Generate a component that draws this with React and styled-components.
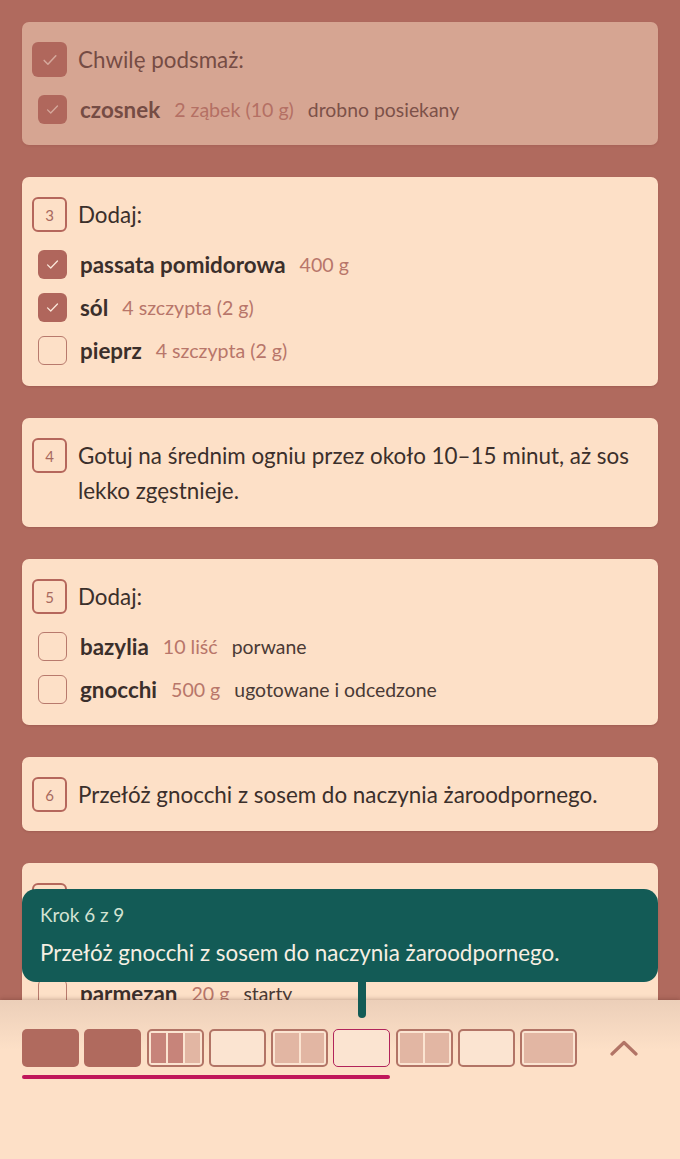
import styled, { createGlobalStyle } from "styled-components"

const GlobalStyle = createGlobalStyle`
  html, body {
    margin: 0;
    padding: 0;
    background: #b06a5e;
    font-family: Lato, "Noto Sans", sans-serif;
  }
  * { box-sizing: border-box; }
`

const steps = [
  {
    n: 2, done: true, text: "Chwilę podsmaż:",
    ingredients: [{ name: "czosnek", qty: "2 ząbek (10 g)", note: "drobno posiekany", checked: true }],
  },
  {
    n: 3, text: "Dodaj:",
    ingredients: [
      { name: "passata pomidorowa", qty: "400 g", checked: true },
      { name: "sól", qty: "4 szczypta (2 g)", checked: true },
      { name: "pieprz", qty: "4 szczypta (2 g)" },
    ],
  },
  { n: 4, text: "Gotuj na średnim ogniu przez około 10–15 minut, aż sos lekko zgęstnieje." },
  {
    n: 5, text: "Dodaj:",
    ingredients: [
      { name: "bazylia", qty: "10 liść", note: "porwane" },
      { name: "gnocchi", qty: "500 g", note: "ugotowane i odcedzone" },
    ],
  },
  { n: 6, text: "Przełóż gnocchi z sosem do naczynia żaroodpornego." },
  {
    n: 7, text: "Dodaj:",
    ingredients: [
      { name: "mozzarella", qty: "125 g", note: "porwana" },
      { name: "parmezan", qty: "20 g", note: "starty" },
    ],
  },
]

const segments = [
  { done: true },
  { done: true },
  { parts: [1, 1, 0] },
  {},
  { parts: [0, 0] },
  { current: true },
  { parts: [0, 0] },
  {},
  { parts: [0] },
]

const Page = styled.div`
  height: 100vh;
  overflow: hidden;
`

const List = styled.div`
  display: flex;
  flex-direction: column;
  gap: 32px;
  padding: 22px 22px 0;
`

const Card = styled.div`
  background: #fde0c7;
  border-radius: 7px;
  padding: 20px 10px 19px;
  opacity: ${p => (p.$done ? 0.5 : 1)};
  box-shadow: 0 1px 2px rgba(80, 30, 20, 0.15);
`

const Head = styled.div`
  display: flex;
  align-items: flex-start;
  gap: 11px;
`

const NumBox = styled.div`
  flex: none;
  width: 35px;
  height: 35px;
  border: 2px solid #b5675c;
  border-radius: 6px;
  display: flex;
  align-items: center;
  justify-content: center;
  font-size: 15px;
  color: #a8695e;
`

const StepBox = styled.div`
  flex: none;
  width: 35px;
  height: 35px;
  border-radius: 6px;
  background: #b0665c;
  display: flex;
  align-items: center;
  justify-content: center;
`

const StepText = styled.div`
  font-size: 22.4px;
  line-height: 35px;
  color: #3b2f2b;
`

const Ingredients = styled.div`
  display: flex;
  flex-direction: column;
  gap: 14px;
  margin-top: 18px;
  padding: 0 0 2px 6px;
`

const Row = styled.div`
  display: flex;
  align-items: center;
  height: 29px;
`

const Box = styled.div`
  flex: none;
  width: 29px;
  height: 29px;
  border-radius: 6px;
  margin-right: 13px;
  display: flex;
  align-items: center;
  justify-content: center;
  background: ${p => (p.$checked ? "#b0665c" : "transparent")};
  border: ${p => (p.$checked ? "none" : "1.5px solid #b87a6d")};
`

const Name = styled.span`
  font-size: 22.4px;
  font-weight: 700;
  color: #3b2f2b;
  margin-right: 14px;
  white-space: nowrap;
`

const Qty = styled.span`
  font-size: 19.6px;
  color: #b8766a;
  margin-right: 14px;
  white-space: nowrap;
`

const Note = styled.span`
  font-size: 19.4px;
  color: #4a3a35;
  white-space: nowrap;
`

const Bar = styled.div`
  position: fixed;
  left: 0;
  right: 0;
  bottom: 0;
  height: 159px;
  background: linear-gradient(#eccfb9, #fde0c7 50px);
  box-shadow: 0 -1px 4px rgba(60, 20, 10, 0.25);
  padding: 29px 22px 0;
  z-index: 5;
`

const Tooltip = styled.div`
  position: absolute;
  left: 22px;
  right: 22px;
  bottom: calc(100% + 18px);
  background: #135b56;
  border-radius: 14px;
  padding: 14px 18px 11px;
  &::after {
    content: "";
    position: absolute;
    left: 336px;
    top: 100%;
    width: 8px;
    height: 36px;
    background: #135b56;
    border-radius: 0 0 4px 4px;
  }
`

const TipLabel = styled.div`
  font-size: 18.9px;
  color: #d3e3d3;
  line-height: 24px;
`

const TipText = styled.div`
  font-size: 22.4px;
  color: #f6efe3;
  line-height: 36px;
  margin-top: 8px;
`

const BarRow = styled.div`
  display: flex;
  align-items: flex-start;
`

const Track = styled.div`
  display: flex;
  flex-direction: column;
  gap: 8px;
`

const Segs = styled.div`
  display: flex;
  gap: 5.3px;
`

const Seg = styled.div`
  width: 57px;
  height: 38px;
  border-radius: 5px;
  padding: 2px;
  display: flex;
  gap: 2px;
  background: ${p => (p.$done ? "#b06a5e" : "#fbe4d1")};
  border: ${p => (p.$done ? "none" : p.$current ? "1.5px solid #b2245a" : "2px solid #b27466")};
`

const Part = styled.div`
  flex: 1;
  background: ${p => (p.$on ? "#c7847a" : "#e2b6a3")};
`

const Progress = styled.div`
  height: 4px;
  width: 368px;
  border-radius: 2px;
  background: #c0165a;
`

const Chevron = styled.button`
  margin-left: auto;
  margin-top: 10px;
  margin-right: 20px;
  border: none;
  background: transparent;
  padding: 0;
  display: flex;
`

const Check = ({ size = 16 }) => (
  <svg width={size} height={size} viewBox="0 0 24 24" fill="none">
    <path d="M5 12.5l4.5 4.5L19 7" stroke="#fbe7da" strokeWidth="1.8" strokeLinecap="round" strokeLinejoin="round" />
  </svg>
)

const Step = ({ step }) => (
  <Card $done={step.done}>
    <Head>
      {step.done ? (
        <StepBox><Check size={20} /></StepBox>
      ) : (
        <NumBox>{step.n}</NumBox>
      )}
      <StepText>{step.text}</StepText>
    </Head>
    {step.ingredients && (
      <Ingredients>
        {step.ingredients.map(ing => (
          <Row key={ing.name}>
            <Box $checked={ing.checked}>{ing.checked && <Check size={17} />}</Box>
            <Name>{ing.name}</Name>
            <Qty>{ing.qty}</Qty>
            {ing.note && <Note>{ing.note}</Note>}
          </Row>
        ))}
      </Ingredients>
    )}
  </Card>
)

const App = () => {
  return (
    <Page>
      <GlobalStyle />
      <List>
        {steps.map(s => <Step key={s.n} step={s} />)}
      </List>
      <Bar>
        <Tooltip>
          <TipLabel>Krok 6 z 9</TipLabel>
          <TipText>Przełóż gnocchi z sosem do naczynia żaroodpornego.</TipText>
        </Tooltip>
        <BarRow>
          <Track>
            <Segs>
              {segments.map((s, i) => (
                <Seg key={i} $done={s.done} $current={s.current}>
                  {s.parts && s.parts.map((on, j) => <Part key={j} $on={on} />)}
                </Seg>
              ))}
            </Segs>
            <Progress />
          </Track>
          <Chevron aria-label="Rozwiń">
            <svg width="28" height="18" viewBox="0 0 28 18" fill="none">
              <polyline points="2,15 14,3.5 26,15" stroke="#b27466" strokeWidth="3.2" strokeLinecap="round" strokeLinejoin="round" />
            </svg>
          </Chevron>
        </BarRow>
      </Bar>
    </Page>
  )
}

export default App
